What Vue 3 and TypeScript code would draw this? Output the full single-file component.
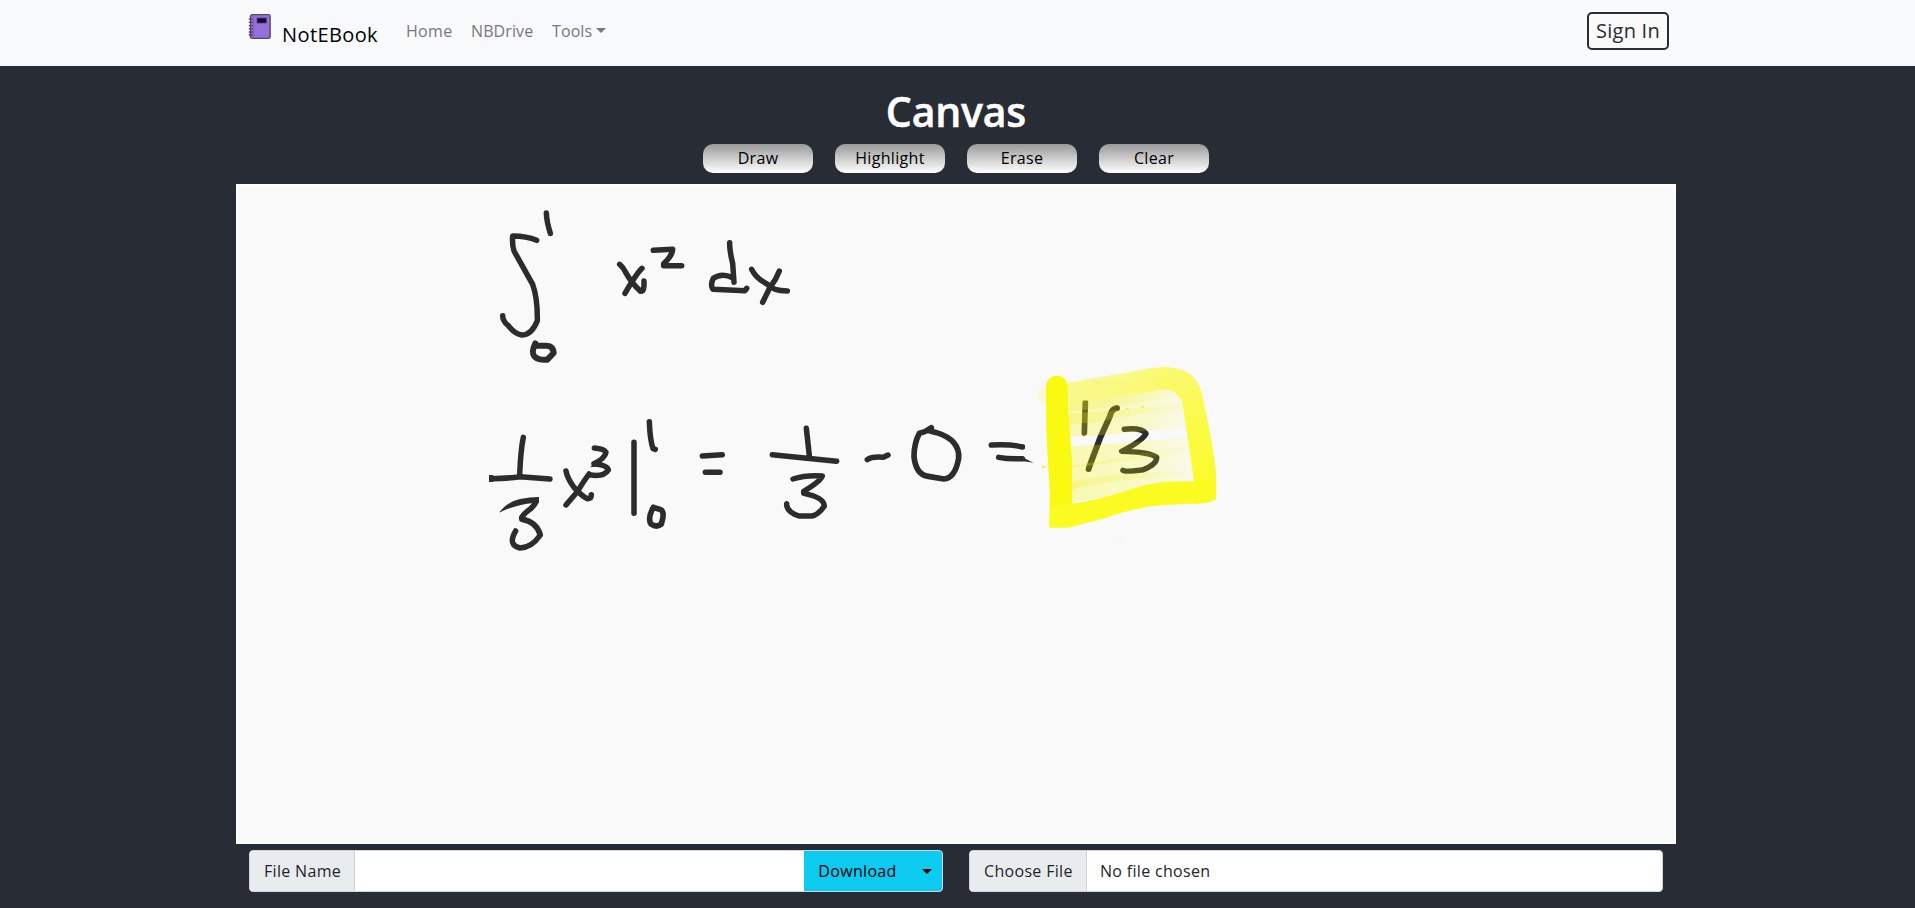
<script setup lang="ts">
interface Stroke { d: string; w?: number }
interface InkGroup { x: number; y: number; strokes: Stroke[] }

const links: string[] = ['Home', 'NBDrive']
const tools: string[] = ['Draw', 'Highlight', 'Erase', 'Clear']

const ink: InkGroup[] = [
  {
    x: 480, y: 195,
    strokes: [
      { d: 'M170,136 Q140,123 98,123 Q96,150 102,168 L158,268 Q173,310 172,377 Q155,420 125,420 Q105,418 85,392 Q68,378 68,362' },
      { d: 'M199,54 Q200,80 211,115' },
      { d: 'M419,208 Q430,217 437,232 Q455,265 482,289 Q494,290 492,258 M486,220 Q470,235 435,295' },
      { d: 'M520,166 L578,163 Q577,182 551,206 L551,212 L605,212' },
      { d: 'M749,143 Q748,165 758,205 L762,262 M758,248 Q725,232 700,250 Q690,270 699,283 L795,287 L800,280' },
      { d: 'M815,223 Q828,250 860,266 Q878,287 922,288 M898,228 Q888,255 870,277 L848,322' },
      { d: 'M166,445 Q153,472 163,484 Q175,496 202,494 L221,474 Q220,453 200,452 L168,452', w: 18 },
    ],
  },
  {
    x: 470, y: 410,
    strokes: [
      { d: 'M160,82 Q152,120 149,195 M66,206 Q110,206 150,200 L240,207' },
      { d: 'M199,270 Q198,282 180,298 Q162,310 155,322 L155,328 Q200,335 211,375 Q185,413 150,414 Q112,405 137,363' },
      { d: 'M288,183 Q292,205 312,232 Q335,258 352,266 Q364,266 364,254 M357,192 Q338,218 322,245 L288,285 M357,194 Q400,203 415,180 Q412,165 372,161 M372,161 Q405,145 408,127 Q402,116 373,114' },
      { d: 'M492,97 L492,310' },
      { d: 'M538,35 Q540,90 549,116 L556,118' },
      { d: 'M550,292 Q532,325 543,342 Q560,354 574,342 Q588,300 566,297 L550,292', w: 17 },
      { d: 'M697,138 L757,134 M706,187 L750,187' },
    ],
  },
  {
    x: 740, y: 410,
    strokes: [
      { d: 'M199,55 L208,137 M97,134 L290,154' },
      { d: 'M159,207 Q200,194 247,198 Q240,215 191,244 L191,250 Q252,262 253,288 Q235,315 215,318 L177,318 Q138,305 140,281' },
      { d: 'M382,149 Q395,139 430,142 L444,135' },
      { d: 'M574,53 Q558,66 538,70 Q522,100 522,140 Q528,195 565,199 L612,207 Q645,205 656,145 Q660,90 590,68 L568,62', w: 17 },
      { d: 'M754,105 Q815,102 848,111 M776,142 Q805,148 847,146' },
    ],
  },
  {
    x: 1020, y: 350,
    strokes: [
      { d: 'M196,158 L193,249', w: 17 },
      { d: 'M291,174 Q275,176 270,198 L240,265 L208,350 L206,357', w: 18 },
      { d: 'M313,238 Q365,232 378,251 Q367,272 305,304 Q388,306 410,322 Q410,344 370,359 Q315,366 309,361' },
    ],
  },
]

const wash = 'M145,100 L440,62 Q495,65 488,162 L522,391 L155,458 Z'
const streaks: string[] = [
  'M145,155 Q310,145 445,115 L470,132 Q320,173 145,184 Z',
  'M145,190 L260,184 L485,163 L490,181 Q350,190 220,218 L145,222 Z',
  'M152,347 L260,330 L510,282 L513,304 Q350,330 155,354 Z',
  'M155,395 Q250,372 515,360 L520,372 Q300,386 155,419 Z',
]
</script>

<template>
  <div class="page">
    <nav class="navbar">
      <a class="brand">
        <svg class="book" viewBox="0 0 23 27" width="23" height="27">
          <rect x="2.5" y="1.6" width="19.6" height="23.8" rx="1.8" fill="#9470da" stroke="#55476d" stroke-width="1.4" />
          <path d="M5.5 3V24" stroke="#8261c8" stroke-width="1" />
          <rect x="9" y="5" width="9.4" height="5" fill="#170d29" stroke="#523a86" stroke-width=".7" />
          <path d="M.8 6.2H5M.8 9.4H5M.8 12.6H5M.8 15.8H5M.8 19H5M.8 22H5" stroke="#4d3d70" stroke-width="1.3" stroke-dasharray="1.6 .8" />
        </svg>
        <span class="brand-name">NotEBook</span>
      </a>
      <a v-for="link in links" :key="link" class="link" :class="link.toLowerCase()">{{ link }}</a>
      <a class="link tools-link">Tools<i class="caret"></i></a>
      <button class="sign-in">Sign In</button>
    </nav>

    <main class="main">
      <h1>Canvas</h1>
      <div class="toolbar">
        <button v-for="tool in tools" :key="tool" class="tool">{{ tool }}</button>
      </div>

      <div class="board">
        <svg viewBox="238 186 1436 656" width="1436" height="656">
          <g fill="none" stroke="#2c2c2a" stroke-linecap="round" stroke-linejoin="round">
            <g v-for="(group, i) in ink" :key="i" :transform="`translate(${group.x} ${group.y}) scale(.33333)`">
              <path v-for="(s, j) in group.strokes" :key="j" :d="s.d" :stroke-width="s.w ?? 16.5" />
            </g>
          </g>
          <g transform="translate(470 410) scale(.33333)" fill="#2c2c2a">
            <path d="M87,308 Q112,275 150,267 Q180,261 207,261 L207,278 L190,279 Q140,283 87,308 Z" />
            <rect x="57" y="195" width="13" height="21" />
            <path d="M360,172 L385,150 L400,168 Z" />
          </g>
          <g transform="translate(740 410) scale(.33333)">
            <rect x="855" y="90" width="12" height="54" fill="#f9f9f9" />
            <path d="M847,138 Q855,148 881,158 L845,153 Z" fill="#2c2c2a" />
          </g>
          <defs>
            <linearGradient id="topFade" gradientUnits="userSpaceOnUse" x1="45" y1="0" x2="560" y2="0">
              <stop offset="0" stop-color="#fafa50" stop-opacity=".12" />
              <stop offset=".2" stop-color="#f9f86d" stop-opacity=".55" />
              <stop offset=".6" stop-color="#faf96a" stop-opacity=".85" />
              <stop offset="1" stop-color="#fbfa45" />
            </linearGradient>
            <linearGradient id="sideFade" x1="0" y1="0" x2="0" y2="1">
              <stop offset="0" stop-color="#faf970" />
              <stop offset=".35" stop-color="#fbfa4d" />
              <stop offset="1" stop-color="#fbfb20" />
            </linearGradient>
            <linearGradient id="washFade" gradientUnits="userSpaceOnUse" x1="145" y1="0" x2="525" y2="0">
              <stop offset="0" stop-color="#f8f700" stop-opacity=".29" />
              <stop offset=".55" stop-color="#f8f700" stop-opacity=".2" />
              <stop offset="1" stop-color="#f8f700" stop-opacity=".05" />
            </linearGradient>
            <linearGradient id="bandFade" gradientUnits="userSpaceOnUse" x1="145" y1="0" x2="525" y2="0">
              <stop offset="0" stop-color="#f2ed20" stop-opacity=".28" />
              <stop offset="1" stop-color="#f2ed20" stop-opacity=".03" />
            </linearGradient>
            <clipPath id="washClip">
              <path d="M140,90 H530 V227 Q350,248 140,262 Z M140,290 Q350,278 530,258 V470 H140 Z" />
            </clipPath>
          </defs>
          <g transform="translate(1020 350) scale(.33333)">
            <path :d="wash" fill="url(#washFade)" clip-path="url(#washClip)" />
            <path v-for="d in streaks" :key="d" :d="d" fill="url(#bandFade)" />
            <path d="M78,105 Q48,115 48,140 Q52,163 80,168 L145,157 L290,143 L436,117 Q465,118 478,145 L543,125 Q515,53 432,52 Q390,52 310,70 L143,97 Z" fill="url(#topFade)" />
            <path d="M430,52 Q498,50 529,92 Q545,115 553,165 Q588,330 588,380 V448 L553,459 L522,461 V391 L488,165 Q485,125 436,117 Z" fill="url(#sideFade)" />
            <path d="M78,111 Q79,80 111,77 Q139,80 143,108 L144,170 L156,345 V461 Q230,451 320,422 Q380,400 440,395 L588,392 V448 Q570,458 553,459 L420,466 Q340,474 250,506 Q190,521 145,533 H87 L90,430 L80,260 Z" fill="#fbfb22" />
            <path d="M78,111 Q79,80 111,77 Q139,80 143,108 L144,170 L156,345 V461 L90,475 L90,430 L80,260 Z" fill="#f9f912" />
            <path d="M315,174 L326,175 L326,178 L317,177 Z M361,173 L367,168 L373,169 L368,174 Z M63,350 L77,347 L76,352 L67,354 Z M311,289 L317,285 L317,289 Z M178,427 L184,428 L183,430 Z" fill="#f4ee18" />
            <path d="M288,561 L314,568 L305,569 Z" fill="#f7f5b6" />
          </g>
        </svg>
      </div>

      <div class="file-bar">
        <div class="group">
          <span class="addon name-addon">File Name</span>
          <input class="field" type="text" aria-label="File Name" />
          <button class="download">Download</button>
          <button class="split" aria-label="Download options"><i class="caret"></i></button>
        </div>
        <div class="group">
          <span class="addon choose-addon">Choose File</span>
          <span class="chosen">No file chosen</span>
        </div>
      </div>
    </main>
  </div>
</template>

<style>
html, body { margin: 0; background: #282c34; }
</style>

<style scoped>
* { box-sizing: border-box; }
.page {
  height: 908px;
  overflow: hidden;
  background: #282c34;
  font: 400 16px/24px "Open Sans", "Noto Sans", sans-serif;
  letter-spacing: .32px;
  color: #212529;
}
button { font: inherit; letter-spacing: inherit; padding: 0; margin: 0; border: 0; }
.navbar {
  height: 66px;
  padding: 0 246px 0 248px;
  display: flex;
  align-items: flex-start;
  background: #f8f9fb;
}
.brand { display: flex; width: 158px; color: #000; }
.book { margin-top: 13px; }
.brand-name { margin: 20px 0 0 11px; font-size: 20px; line-height: 30px; letter-spacing: .4px; }
.link { margin-top: 19px; color: #77787a; }
.home { width: 65px; }
.nbdrive { width: 81px; letter-spacing: .1px; }
.tools-link { letter-spacing: .1px; }
.caret {
  display: inline-block;
  border: 5px solid transparent;
  border-top-color: currentColor;
  border-bottom: 0;
}
.link .caret { margin-left: 4px; vertical-align: 4px; }
.sign-in {
  margin: 12px 0 0 auto;
  width: 82px;
  height: 38px;
  border: 2px solid #282c34;
  border-radius: 5px;
  background: #fafafb;
  color: #282c34;
  font-size: 20px;
  line-height: 34px;
  letter-spacing: .25px;
}
.main { display: flex; flex-direction: column; align-items: center; width: 1440px; margin-left: 236px; }
h1 { margin: 21px 0 9px; font-size: 41px; line-height: 48px; font-weight: 600; color: #fff; letter-spacing: -.2px; -webkit-text-stroke: .5px #fff; }
.toolbar { display: flex; gap: 22px; height: 40px; }
.tool {
  width: 110px;
  height: 29px;
  padding-bottom: 1px;
  border-radius: 10px;
  background: linear-gradient(#999, #fff);
  color: #000;
}
.board { width: 1440px; height: 660px; border: 2px solid #fff; background: #f9f9f9; }
.board svg { display: block; }
.file-bar { display: flex; gap: 26px; width: 1414px; margin: 6px 0 0 0; }
.group { display: flex; width: 694px; height: 42px; border-radius: 4px; overflow: hidden; background: #fff; border: 1px solid #ced4da; line-height: 40px; }
.addon { background: #e9ecef; border-right: 1px solid #ced4da; padding-left: 14px; white-space: nowrap; }
.name-addon { width: 105px; }
.choose-addon { width: 117px; }
.field { flex: 1; min-width: 0; border: 0; outline: 0; background: #fff; }
.download { width: 107px; margin: -1px 0; background: #0dcaf0; color: #000; }
.split { width: 32px; margin: -1px -1px -1px 0; background: #0dcaf0; color: #000; display: flex; align-items: center; justify-content: center; }
.chosen { padding-left: 13px; }
</style>
